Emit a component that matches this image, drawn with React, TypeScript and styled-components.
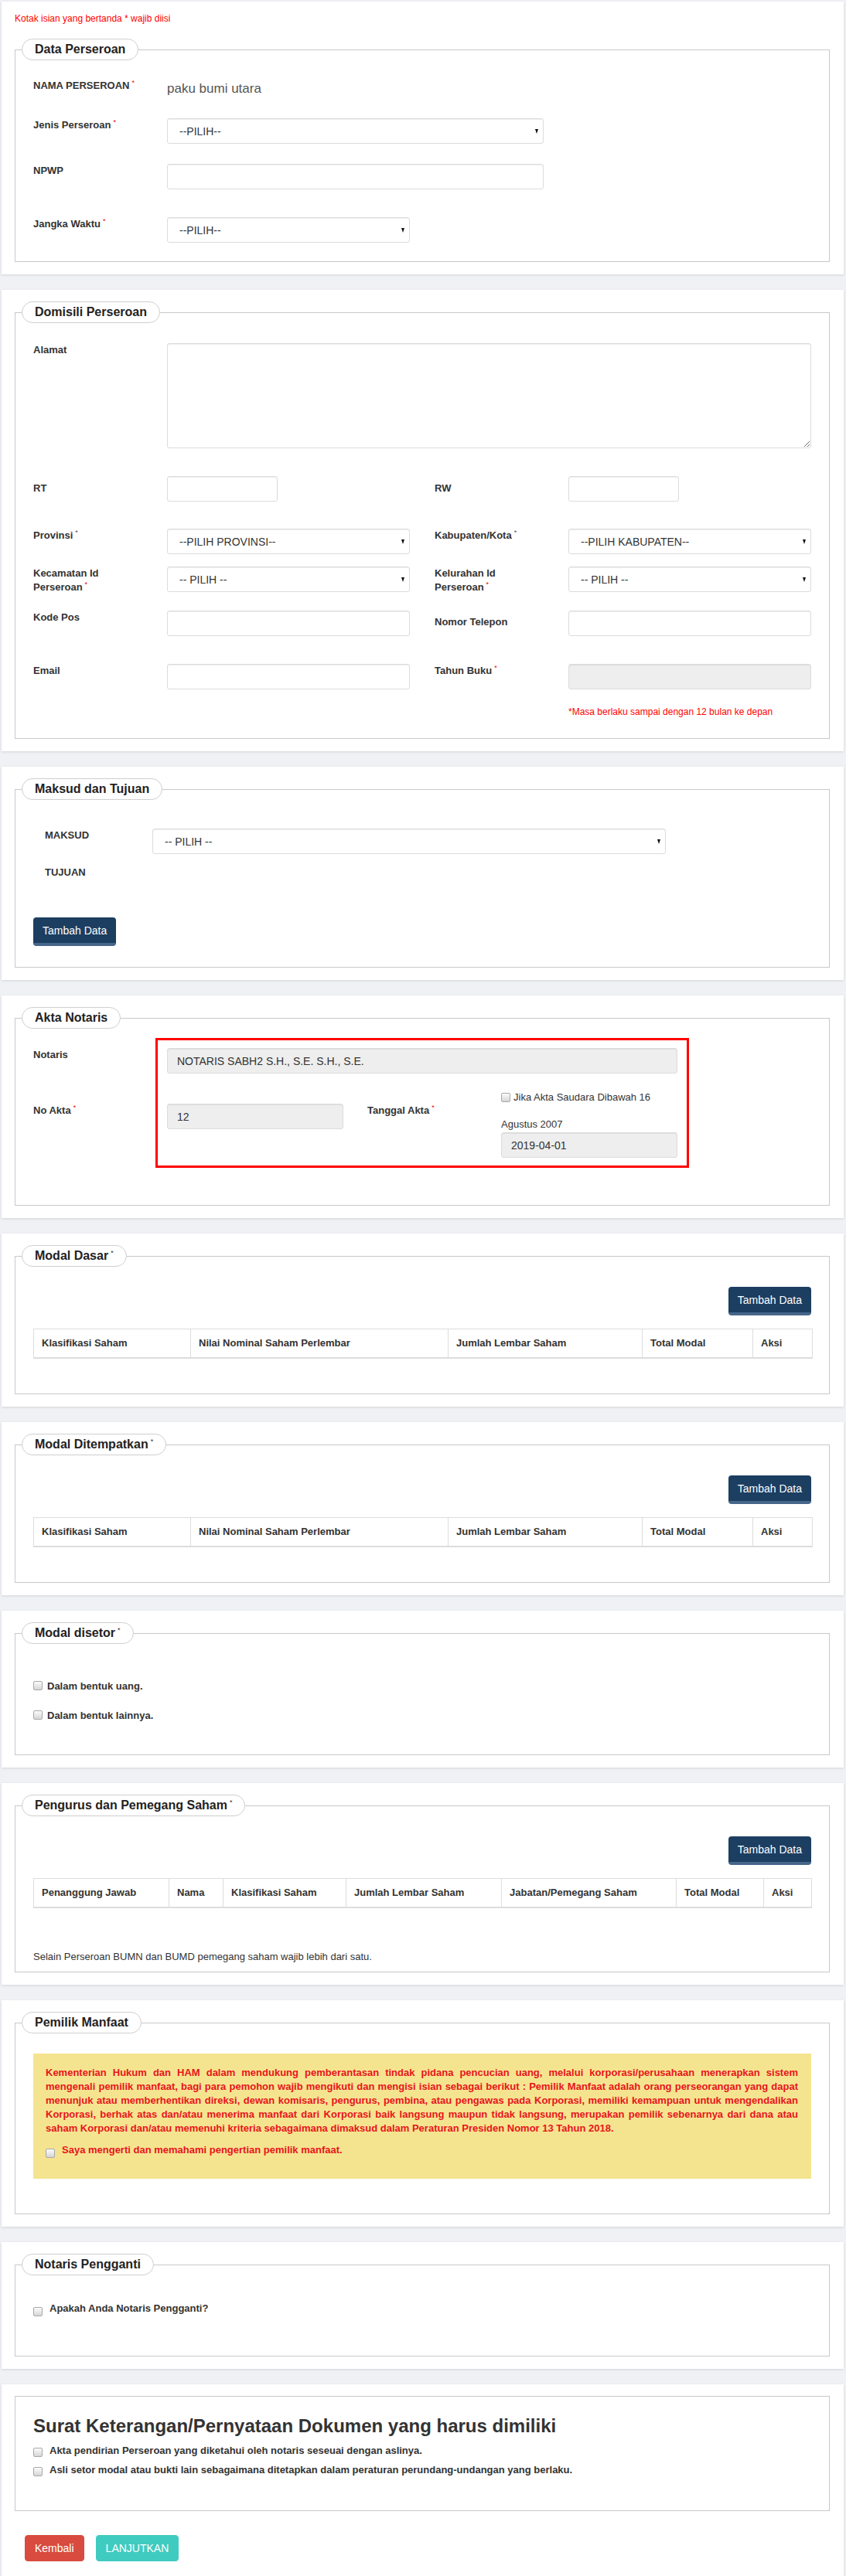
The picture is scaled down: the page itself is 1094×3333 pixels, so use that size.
import React from 'react';
import styled, { createGlobalStyle } from 'styled-components';

const GlobalStyle = createGlobalStyle`
  * {
    box-sizing: border-box;
  }

  body {
    margin: 0;
    background: #f0f1f5;
    font-family: "Liberation Sans", Arial, Helvetica, sans-serif;
    font-size: 13px;
    color: #333;
  }
`;

const Page = styled.div`
  display: flex;
  flex-direction: column;
  gap: 20px;
  padding: 2px 3px 2px 2px;
`;

const Card = styled.section`
  background: #fff;
  padding: 15px 18px 16px 17px;
  box-shadow: 0 1px 3px rgba(0, 0, 0, 0.12);
`;

const RequiredNote = styled.p`
  margin: 0 0 18px;
  font-size: 12px;
  line-height: 15px;
  color: #f00;
`;

const Fieldset = styled.fieldset`
  margin: 0;
  padding: 0 8px;
  min-width: 0;
  border: 1px solid #c8c8c8;
`;

const Legend = styled.legend`
  height: 28px;
  padding: 0 16px;
  border: 1px solid #cfcfcf;
  border-radius: 14px;
  background: #fff;
  font-size: 16px;
  font-weight: bold;
  line-height: 26px;
  color: #222;
`;

const FieldBody = styled.div<{ $pt: number; $pb: number }>`
  padding: ${(p) => p.$pt}px 15px ${(p) => p.$pb}px;
`;

const Star = styled.span<{ $c?: string }>`
  margin-left: 3px;
  font-size: 9px;
  font-weight: normal;
  line-height: 0;
  vertical-align: super;
  color: ${(p) => p.$c ?? '#e00'};
`;

const Label = styled.label<{ $pt?: number; $pl?: number }>`
  display: block;
  padding-top: ${(p) => p.$pt ?? 0}px;
  padding-left: ${(p) => p.$pl ?? 0}px;
  font-weight: bold;
  line-height: 18px;
  color: #333;
`;

const FormRow = styled.div<{ $mb?: number; $cols?: string }>`
  display: grid;
  grid-template-columns: ${(p) => p.$cols ?? '173px 1fr'};
  align-items: start;
  margin-bottom: ${(p) => p.$mb ?? 0}px;
`;

const PairRow = styled.div<{ $mb?: number }>`
  display: grid;
  grid-template-columns: 1fr 1fr;
  column-gap: 32px;
  align-items: start;
  margin-bottom: ${(p) => p.$mb ?? 0}px;
`;

const Half = styled.div`
  display: grid;
  grid-template-columns: 173px 1fr;
  align-items: start;
`;

const StaticValue = styled.div`
  font-size: 17px;
  line-height: 26px;
  color: #555;
`;

const TextInput = styled.input<{ $w?: string; $filled?: boolean; $mt?: number }>`
  display: block;
  width: ${(p) => p.$w ?? '100%'};
  height: 33px;
  margin-top: ${(p) => p.$mt ?? 0}px;
  padding: 6px 12px;
  border: 1px solid #dcdcdc;
  border-radius: 3px;
  box-shadow: inset 0 1px 1px rgba(0, 0, 0, 0.075);
  background: ${(p) => (p.$filled ? '#eee' : '#fff')};
  font-family: inherit;
  font-size: 14px;
  color: #333;
  outline: none;
`;

const TextArea = styled.textarea`
  display: block;
  width: 100%;
  height: 136px;
  padding: 6px 12px;
  border: 1px solid #dcdcdc;
  border-radius: 3px;
  box-shadow: inset 0 1px 1px rgba(0, 0, 0, 0.075);
  font-family: inherit;
  font-size: 14px;
`;

const SelectWrap = styled.div<{ $w?: string }>`
  position: relative;
  width: ${(p) => p.$w ?? '100%'};

  &::after {
    content: '';
    position: absolute;
    top: 50%;
    right: 7px;
    margin-top: -3px;
    border-left: 2.5px solid transparent;
    border-right: 2.5px solid transparent;
    border-top: 6px solid #111;
    pointer-events: none;
  }
`;

const Select = styled.select`
  display: block;
  width: 100%;
  height: 33px;
  padding: 0 20px 0 15px;
  appearance: none;
  border: 1px solid #dcdcdc;
  border-radius: 3px;
  box-shadow: inset 0 1px 1px rgba(0, 0, 0, 0.075);
  background: #fff;
  font-family: inherit;
  font-size: 14px;
  color: #333;
`;

const RedNote = styled.p`
  margin: 0;
  font-size: 12px;
  line-height: 15px;
  color: #f00;
`;

const Indent = styled.div`
  padding-left: 15px;
`;

const NavyButton = styled.button<{ $mt?: number }>`
  display: inline-block;
  margin-top: ${(p) => p.$mt ?? 0}px;
  padding: 7px 12px 6px;
  border: none;
  border-bottom: 4px solid #46668a;
  border-radius: 4px;
  background: #1c3e61;
  font-family: inherit;
  font-size: 14px;
  line-height: 20px;
  color: #fff;
`;

const AktaArea = styled.div`
  position: relative;
`;

const Highlight = styled.div`
  position: absolute;
  top: -13px;
  left: 158px;
  width: 690px;
  height: 168px;
  border: 3px solid #f00;
  pointer-events: none;
`;

const Stack = styled.div`
  display: flex;
  flex-direction: column;
`;

const Caption = styled.div<{ $mt?: number }>`
  margin-top: ${(p) => p.$mt ?? 0}px;
  line-height: 16px;
  color: #333;
`;

const CheckLine = styled.label<{ $gap?: number; $bold?: boolean; $mt?: number; $lh?: number }>`
  display: flex;
  align-items: flex-start;
  gap: ${(p) => p.$gap ?? 6}px;
  margin-top: ${(p) => p.$mt ?? 0}px;
  font-weight: ${(p) => (p.$bold === false ? 'normal' : 'bold')};
  line-height: ${(p) => p.$lh ?? 18}px;
`;

const Check = styled.input.attrs({ type: 'checkbox' })<{ $mt?: number }>`
  flex: none;
  width: 12px;
  height: 12px;
  margin: ${(p) => p.$mt ?? 2}px 0 0;
  appearance: none;
  border: 1px solid #a8a8a8;
  border-radius: 2px;
  background: linear-gradient(#fbfbfb, #d6d6d6);
`;

const ToolRow = styled.div`
  display: flex;
  justify-content: flex-end;
  margin-bottom: 17px;
`;

const Table = styled.table`
  width: 100%;
  border-collapse: collapse;
  table-layout: fixed;
`;

const Th = styled.th<{ $w: number }>`
  width: ${(p) => p.$w}px;
  padding: 9px 10px;
  border: 1px solid #ddd;
  border-bottom: 2px solid #ddd;
  text-align: left;
  font-weight: bold;
  line-height: 18px;
  color: #333;
  white-space: nowrap;
`;

const Remark = styled.p`
  margin: 54px 0 0;
  line-height: 18px;
`;

const Notice = styled.div`
  padding: 16px 17px 27px 16px;
  background: #f5e48f;
  color: #e8141c;
  font-size: 13px;
  font-weight: bold;
  line-height: 18px;
`;

const NoticeText = styled.p`
  margin: 0;
  text-align: justify;
`;

const Heading = styled.h2`
  margin: 0;
  font-size: 24px;
  font-weight: bold;
  line-height: 26px;
  color: #333;
`;

const CheckList = styled.div`
  display: flex;
  flex-direction: column;
  gap: 7px;
  margin-top: 10px;
`;

const ActionBar = styled.div`
  display: flex;
  gap: 15px;
  padding: 31px 0 14px 13px;
`;

const ActionButton = styled.button<{ $bg: string }>`
  padding: 6px 12px;
  border: 1px solid ${(p) => p.$bg};
  border-radius: 4px;
  background: ${(p) => p.$bg};
  font-family: inherit;
  font-size: 14px;
  line-height: 20px;
  color: #fff;
`;

const modalCols = [
  ['Klasifikasi Saham', 203],
  ['Nilai Nominal Saham Perlembar', 333],
  ['Jumlah Lembar Saham', 251],
  ['Total Modal', 143],
  ['Aksi', 77],
] as const;

const pengurusCols = [
  ['Penanggung Jawab', 175],
  ['Nama', 70],
  ['Klasifikasi Saham', 159],
  ['Jumlah Lembar Saham', 201],
  ['Jabatan/Pemegang Saham', 226],
  ['Total Modal', 113],
  ['Aksi', 62],
] as const;

function HeaderTable({ cols }: { cols: ReadonlyArray<readonly [string, number]> }) {
  return (
    <Table>
      <thead>
        <tr>
          {cols.map(([name, w]) => (
            <Th key={name} $w={w}>
              {name}
            </Th>
          ))}
        </tr>
      </thead>
    </Table>
  );
}

function Dropdown({ value, w }: { value: string; w?: string }) {
  return (
    <SelectWrap $w={w}>
      <Select defaultValue={value}>
        <option>{value}</option>
      </Select>
    </SelectWrap>
  );
}

export default function App() {
  return (
    <>
      <GlobalStyle />
      <Page>
        <Card>
          <RequiredNote>Kotak isian yang bertanda * wajib diisi</RequiredNote>
          <Fieldset>
            <Legend>Data Perseroan</Legend>
            <FieldBody $pt={24} $pb={24}>
              <FormRow $mb={25}>
                <Label>
                  NAMA PERSEROAN<Star>*</Star>
                </Label>
                <StaticValue>paku bumi utara</StaticValue>
              </FormRow>
              <FormRow $mb={26}>
                <Label>
                  Jenis Perseroan<Star>*</Star>
                </Label>
                <Dropdown value="--PILIH--" w="487px" />
              </FormRow>
              <FormRow $mb={36}>
                <Label>NPWP</Label>
                <TextInput $w="487px" />
              </FormRow>
              <FormRow>
                <Label>
                  Jangka Waktu<Star>*</Star>
                </Label>
                <Dropdown value="--PILIH--" w="314px" />
              </FormRow>
            </FieldBody>
          </Fieldset>
        </Card>

        <Card>
          <Fieldset>
            <Legend>Domisili Perseroan</Legend>
            <FieldBody $pt={26} $pb={26}>
              <FormRow $mb={36}>
                <Label>Alamat</Label>
                <TextArea />
              </FormRow>
              <PairRow $mb={35}>
                <Half>
                  <Label $pt={7}>RT</Label>
                  <TextInput $w="143px" />
                </Half>
                <Half>
                  <Label $pt={7}>RW</Label>
                  <TextInput $w="143px" />
                </Half>
              </PairRow>
              <PairRow $mb={16}>
                <Half>
                  <Label>
                    Provinsi<Star $c="#555">*</Star>
                  </Label>
                  <Dropdown value="--PILIH PROVINSI--" />
                </Half>
                <Half>
                  <Label>
                    Kabupaten/Kota<Star $c="#555">*</Star>
                  </Label>
                  <Dropdown value="--PILIH KABUPATEN--" />
                </Half>
              </PairRow>
              <PairRow $mb={21}>
                <Half>
                  <Label>
                    Kecamatan Id
                    <br />
                    Perseroan<Star>*</Star>
                  </Label>
                  <Dropdown value="-- PILIH --" />
                </Half>
                <Half>
                  <Label>
                    Kelurahan Id
                    <br />
                    Perseroan<Star>*</Star>
                  </Label>
                  <Dropdown value="-- PILIH --" />
                </Half>
              </PairRow>
              <PairRow $mb={36}>
                <Half>
                  <Label>Kode Pos</Label>
                  <TextInput />
                </Half>
                <Half>
                  <Label $pt={6}>Nomor Telepon</Label>
                  <TextInput />
                </Half>
              </PairRow>
              <PairRow $mb={22}>
                <Half>
                  <Label>Email</Label>
                  <TextInput />
                </Half>
                <Half>
                  <Label>
                    Tahun Buku<Star>*</Star>
                  </Label>
                  <TextInput $filled readOnly />
                </Half>
              </PairRow>
              <PairRow>
                <div />
                <Half>
                  <div />
                  <RedNote>*Masa berlaku sampai dengan 12 bulan ke depan</RedNote>
                </Half>
              </PairRow>
            </FieldBody>
          </Fieldset>
        </Card>

        <Card>
          <Fieldset>
            <Legend>Maksud dan Tujuan</Legend>
            <FieldBody $pt={37} $pb={27}>
              <Indent>
                <FormRow $cols="139px 664px" $mb={15}>
                  <Label $pt={0}>MAKSUD</Label>
                  <Dropdown value="-- PILIH --" />
                </FormRow>
                <FormRow $cols="139px 664px">
                  <Label>TUJUAN</Label>
                </FormRow>
              </Indent>
              <NavyButton $mt={49}>Tambah Data</NavyButton>
            </FieldBody>
          </Fieldset>
        </Card>

        <Card>
          <Fieldset>
            <Legend>Akta Notaris</Legend>
            <FieldBody $pt={25} $pb={61}>
              <AktaArea>
                <FormRow $cols="173px 660px" $mb={23}>
                  <Label>Notaris</Label>
                  <TextInput $filled readOnly value="NOTARIS SABH2 S.H., S.E. S.H., S.E." />
                </FormRow>
                <FormRow $cols="173px 228px 204px 228px">
                  <Label $pt={16}>
                    No Akta<Star>*</Star>
                  </Label>
                  <TextInput $filled readOnly value="12" $mt={16} />
                  <Label $pt={16} $pl={31}>
                    Tanggal Akta<Star>*</Star>
                  </Label>
                  <Stack>
                    <CheckLine $bold={false} $gap={4} $lh={16}>
                      <Check $mt={2} />
                      Jika Akta Saudara Dibawah 16
                    </CheckLine>
                    <Caption $mt={19}>Agustus 2007</Caption>
                    <TextInput $filled readOnly value="2019-04-01" $mt={2} />
                  </Stack>
                </FormRow>
                <Highlight />
              </AktaArea>
            </FieldBody>
          </Fieldset>
        </Card>

        <Card>
          <Fieldset>
            <Legend>
              Modal Dasar<Star $c="#333">*</Star>
            </Legend>
            <FieldBody $pt={26} $pb={45}>
              <ToolRow>
                <NavyButton>Tambah Data</NavyButton>
              </ToolRow>
              <HeaderTable cols={modalCols} />
            </FieldBody>
          </Fieldset>
        </Card>

        <Card>
          <Fieldset>
            <Legend>
              Modal Ditempatkan<Star $c="#333">*</Star>
            </Legend>
            <FieldBody $pt={26} $pb={45}>
              <ToolRow>
                <NavyButton>Tambah Data</NavyButton>
              </ToolRow>
              <HeaderTable cols={modalCols} />
            </FieldBody>
          </Fieldset>
        </Card>

        <Card>
          <Fieldset>
            <Legend>
              Modal disetor<Star $c="#333">*</Star>
            </Legend>
            <FieldBody $pt={46} $pb={41}>
              <CheckLine $gap={6}>
                <Check $mt={2} />
                Dalam bentuk uang.
              </CheckLine>
              <CheckLine $gap={6} $mt={20}>
                <Check $mt={2} />
                Dalam bentuk lainnya.
              </CheckLine>
            </FieldBody>
          </Fieldset>
        </Card>

        <Card>
          <Fieldset>
            <Legend>
              Pengurus dan Pemegang Saham<Star $c="#333">*</Star>
            </Legend>
            <FieldBody $pt={26} $pb={10}>
              <ToolRow>
                <NavyButton>Tambah Data</NavyButton>
              </ToolRow>
              <HeaderTable cols={pengurusCols} />
              <Remark>Selain Perseroan BUMN dan BUMD pemegang saham wajib lebih dari satu.</Remark>
            </FieldBody>
          </Fieldset>
        </Card>

        <Card>
          <Fieldset>
            <Legend>Pemilik Manfaat</Legend>
            <FieldBody $pt={26} $pb={45}>
              <Notice>
                <NoticeText>
                  Kementerian Hukum dan HAM dalam mendukung pemberantasan tindak pidana pencucian uang,
                  melalui korporasi/perusahaan menerapkan sistem mengenali pemilik manfaat, bagi para
                  pemohon wajib mengikuti dan mengisi isian sebagai berikut : Pemilik Manfaat adalah orang
                  perseorangan yang dapat menunjuk atau memberhentikan direksi, dewan komisaris, pengurus,
                  pembina, atau pengawas pada Korporasi, memiliki kemampuan untuk mengendalikan Korporasi,
                  berhak atas dan/atau menerima manfaat dari Korporasi baik langsung maupun tidak
                  langsung, merupakan pemilik sebenarnya dari dana atau saham Korporasi dan/atau memenuhi
                  kriteria sebagaimana dimaksud dalam Peraturan Presiden Nomor 13 Tahun 2018.
                </NoticeText>
                <CheckLine $gap={9} $mt={10}>
                  <Check $mt={7} />
                  Saya mengerti dan memahami pengertian pemilik manfaat.
                </CheckLine>
              </Notice>
            </FieldBody>
          </Fieldset>
        </Card>

        <Card>
          <Fieldset>
            <Legend>Notaris Pengganti</Legend>
            <FieldBody $pt={34} $pb={51}>
              <CheckLine $gap={9}>
                <Check $mt={7} />
                Apakah Anda Notaris Pengganti?
              </CheckLine>
            </FieldBody>
          </Fieldset>
        </Card>

        <Card>
          <Fieldset>
            <FieldBody $pt={25} $pb={43}>
              <Heading>Surat Keterangan/Pernyataan Dokumen yang harus dimiliki</Heading>
              <CheckList>
                <CheckLine $gap={9}>
                  <Check $mt={5} />
                  Akta pendirian Perseroan yang diketahui oleh notaris seseuai dengan aslinya.
                </CheckLine>
                <CheckLine $gap={9}>
                  <Check $mt={5} />
                  Asli setor modal atau bukti lain sebagaimana ditetapkan dalam peraturan
                  perundang-undangan yang berlaku.
                </CheckLine>
              </CheckList>
            </FieldBody>
          </Fieldset>
          <ActionBar>
            <ActionButton $bg="#d84b3e">Kembali</ActionButton>
            <ActionButton $bg="#3fcbc0">LANJUTKAN</ActionButton>
          </ActionBar>
        </Card>
      </Page>
    </>
  );
}
